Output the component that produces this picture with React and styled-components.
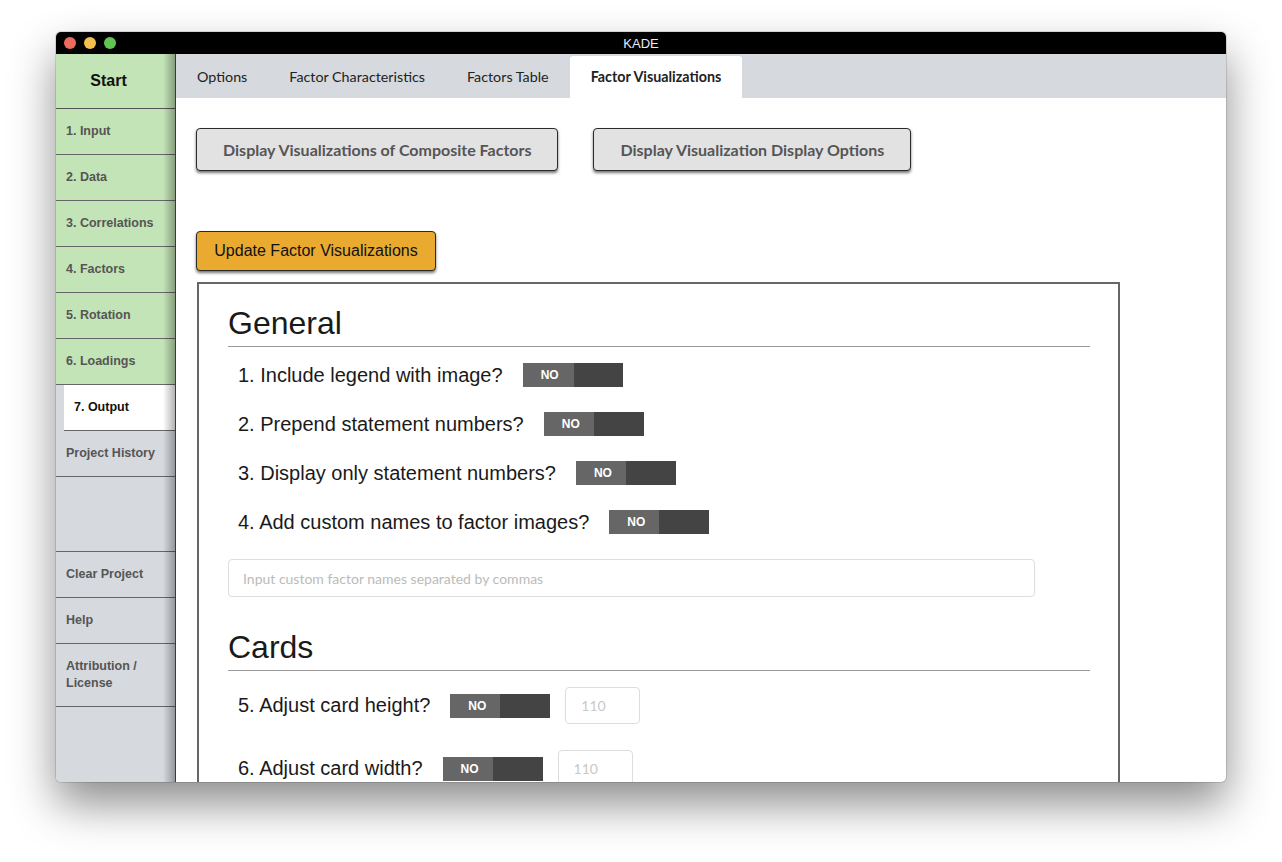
import styled, { createGlobalStyle } from "styled-components";

const GlobalStyle = createGlobalStyle`
  html, body {
    margin: 0;
    padding: 0;
    background: #fff;
    overflow: hidden;
  }
  * { box-sizing: border-box; }
`;

const Stage = styled.div`
  width: 1282px;
  height: 862px;
  padding: 32px 0 0 56px;
`;

const Window = styled.div`
  width: 1170px;
  height: 750px;
  border-radius: 5px;
  overflow: hidden;
  display: flex;
  flex-direction: column;
  background: #fff;
  box-shadow: 0 22px 45px rgba(0, 0, 0, 0.45), 0 0 0 1px rgba(0, 0, 0, 0.12);
`;

const TitleBar = styled.div`
  height: 22px;
  flex: none;
  background: #000;
  display: flex;
  align-items: center;
  position: relative;
  padding-left: 8px;
  gap: 8px;
`;

const Light = styled.span`
  width: 12px;
  height: 12px;
  border-radius: 50%;
  background: ${p => p.$color};
`;

const Title = styled.div`
  position: absolute;
  left: 0;
  right: 0;
  text-align: center;
  color: #e8ecf4;
  font: 13px "Liberation Sans", Arial, sans-serif;
  pointer-events: none;
`;

const Body = styled.div`
  flex: 1;
  display: flex;
  min-height: 0;
`;

const Sidebar = styled.nav`
  width: 120px;
  flex: none;
  background: #d6d9de;
  border-right: 1px solid #3a3a3a;
  display: flex;
  flex-direction: column;
  position: relative;

  &::after {
    content: "";
    position: absolute;
    top: 0;
    right: 0;
    bottom: 0;
    width: 12px;
    background: linear-gradient(to right, rgba(0,0,0,0), rgba(0,0,0,0.3));
    pointer-events: none;
  }
`;

const StartItem = styled.div`
  height: 55px;
  flex: none;
  background: #c3e4b6;
  border-bottom: 1px solid #555;
  display: flex;
  align-items: center;
  justify-content: center;
  padding-right: 14px;
  font: bold 16px "Liberation Sans", Arial, sans-serif;
  color: #111;
`;

const NavItem = styled.div`
  height: ${p => p.$height || 46}px;
  flex: none;
  display: flex;
  align-items: center;
  padding-left: 10px;
  border-bottom: 1px solid #666;
  background: ${p => (p.$done ? "#c3e4b6" : "#d6d9de")};
  font: bold 12.5px/17px "Liberation Sans", Arial, sans-serif;
  color: #555;

  ${p => p.$active && `
    background: #fff;
    margin-left: 8px;
    color: #111;
  `}
`;

const Spacer = styled.div`
  height: 75px;
  flex: none;
  border-bottom: 1px solid #666;
`;

const Main = styled.main`
  flex: 1;
  display: flex;
  flex-direction: column;
  min-width: 0;
  overflow: hidden;
`;

const TabBar = styled.div`
  height: 44px;
  flex: none;
  background: #d6d9de;
  display: flex;
  align-items: flex-end;
`;

const Tab = styled.div`
  height: 42px;
  padding: 0 21px 1px;
  display: flex;
  align-items: center;
  font: ${p => (p.$active ? 700 : 400)} 14.3px Lato, "Liberation Sans", sans-serif;
  color: #222;
  background: ${p => (p.$active ? "#fff" : "transparent")};
  border-radius: 3px 3px 0 0;
`;

const Content = styled.div`
  flex: 1;
  padding: 30px 0 0 20px;
  overflow: hidden;
`;

const ButtonRow = styled.div`
  display: flex;
  gap: 35px;
`;

const GreyButton = styled.button`
  height: 43px;
  padding: 0 26px;
  background: #e2e2e2;
  border: 1px solid #2a2a2a;
  border-radius: 4px;
  box-shadow: 0 2px 3px rgba(0, 0, 0, 0.55);
  font: 700 16px Lato, "Liberation Sans", sans-serif;
  color: #555;
`;

const UpdateButton = styled.button`
  margin-top: 60px;
  height: 40px;
  width: 240px;
  background: #e9aa2f;
  border: 1px solid #2a2a2a;
  border-radius: 4px;
  box-shadow: 0 2px 3px rgba(0, 0, 0, 0.55);
  font: 16px "Liberation Sans", Arial, sans-serif;
  color: #111;
  display: block;
`;

const Panel = styled.section`
  margin-top: 11px;
  margin-left: 1px;
  width: 923px;
  min-height: 620px;
  border: 2px solid #666;
  border-bottom: none;
  padding: 20px 28px 0 29px;
`;

const Heading = styled.h2`
  margin: ${p => p.$top || 0}px 0 0;
  font: 400 32px/38px "Liberation Sans", Arial, sans-serif;
  color: #1a1a1a;
  padding-bottom: 4px;
  border-bottom: 1px solid #999;
`;

const Row = styled.div`
  display: flex;
  align-items: center;
  min-height: 24px;
  margin-top: ${p => p.$top}px;
  padding-left: 10px;
  gap: 20px;
`;

const Label = styled.span`
  font: 20px "Liberation Sans", Arial, sans-serif;
  color: #1a1a1a;
`;

const Toggle = styled.div`
  width: 100px;
  height: 24px;
  display: flex;
  flex: none;
`;

const ToggleOff = styled.span`
  width: 50px;
  padding-left: 4px;
  background: #666;
  color: #fff;
  font: bold 12px "Liberation Sans", Arial, sans-serif;
  display: flex;
  align-items: center;
  justify-content: center;
`;

const ToggleRest = styled.span`
  flex: 1;
  background: #444;
  border-left: ${p => (p.$focus ? "1px solid #4a6a9a" : "none")};
`;

const TextInput = styled.input`
  display: block;
  margin-top: 25px;
  width: 807px;
  height: 38px;
  border: 1px solid #ddd;
  border-radius: 4px;
  padding: 0 14px;
  font: 14px Lato, "Liberation Sans", sans-serif;
  outline: none;

  &::placeholder {
    color: #bbb;
  }
`;

const NumberBox = styled.input`
  width: 75px;
  height: 37px;
  margin-left: -5px;
  border: 1px solid #ddd;
  border-radius: 4px;
  padding: 0 15px;
  font: 14px Lato, "Liberation Sans", sans-serif;
  outline: none;

  &::placeholder {
    color: #c8c8c8;
  }
`;

const steps = [
  { label: "1. Input", done: true },
  { label: "2. Data", done: true },
  { label: "3. Correlations", done: true },
  { label: "4. Factors", done: true },
  { label: "5. Rotation", done: true },
  { label: "6. Loadings", done: true },
  { label: "7. Output", active: true },
  { label: "Project History" },
];

const tabs = ["Options", "Factor Characteristics", "Factors Table", "Factor Visualizations"];

const generalRows = [
  "1. Include legend with image?",
  "2. Prepend statement numbers?",
  "3. Display only statement numbers?",
  "4. Add custom names to factor images?",
];

function NoToggle({ focus }) {
  return (
    <Toggle>
      <ToggleOff>NO</ToggleOff>
      <ToggleRest $focus={focus} />
    </Toggle>
  );
}

export default function App() {
  return (
    <>
      <GlobalStyle />
      <Stage>
        <Window>
          <TitleBar>
            <Light $color="#ec6a5e" />
            <Light $color="#f4bf4f" />
            <Light $color="#61c554" />
            <Title>KADE</Title>
          </TitleBar>
          <Body>
            <Sidebar>
              <StartItem>Start</StartItem>
              {steps.map(s => (
                <NavItem key={s.label} $done={s.done} $active={s.active}>
                  {s.label}
                </NavItem>
              ))}
              <Spacer />
              <NavItem>Clear Project</NavItem>
              <NavItem>Help</NavItem>
              <NavItem $height={63}>Attribution /<br />License</NavItem>
            </Sidebar>
            <Main>
              <TabBar>
                {tabs.map(t => (
                  <Tab key={t} $active={t === "Factor Visualizations"}>{t}</Tab>
                ))}
              </TabBar>
              <Content>
                <ButtonRow>
                  <GreyButton>Display Visualizations of Composite Factors</GreyButton>
                  <GreyButton>Display Visualization Display Options</GreyButton>
                </ButtonRow>
                <UpdateButton>Update Factor Visualizations</UpdateButton>
                <Panel>
                  <Heading>General</Heading>
                  {generalRows.map((r, i) => (
                    <Row key={r} $top={i === 0 ? 16 : 25}>
                      <Label>{r}</Label>
                      <NoToggle focus={i === 0} />
                    </Row>
                  ))}
                  <TextInput placeholder="Input custom factor names separated by commas" />
                  <Heading $top={31}>Cards</Heading>
                  <Row $top={16}>
                    <Label>5. Adjust card height?</Label>
                    <NoToggle />
                    <NumberBox placeholder="110" />
                  </Row>
                  <Row $top={26}>
                    <Label>6. Adjust card width?</Label>
                    <NoToggle />
                    <NumberBox placeholder="110" />
                  </Row>
                </Panel>
              </Content>
            </Main>
          </Body>
        </Window>
      </Stage>
    </>
  );
}
